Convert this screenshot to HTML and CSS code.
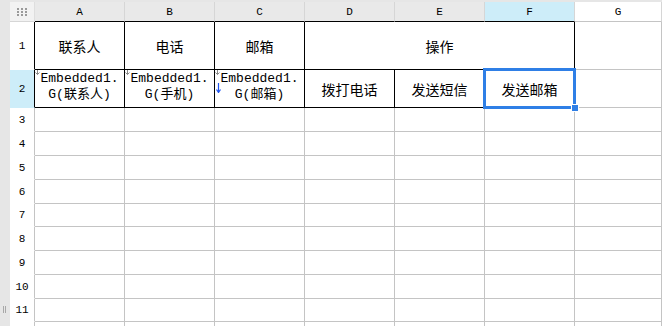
FILE: index.html
```html
<!DOCTYPE html>
<html lang="zh-CN">
<head>
  <meta charset="UTF-8">
  <meta name="viewport" content="width=device-width, initial-scale=1.0">
  <link rel="stylesheet" href="styles.css">
</head>
<body>
  <div class="app">
    <div class="strip"><span class="grip"></span></div>
    <table class="grid">
      <colgroup>
        <col class="col-rh">
        <col class="col"><col class="col"><col class="col">
        <col class="col"><col class="col"><col class="col">
        <col class="col-g">
      </colgroup>
      <thead>
        <tr>
          <th class="corner">
            <svg width="10" height="8" viewBox="0 0 10 8">
              <g fill="#9a9a9a">
                <rect x="0" y="0" width="2" height="2"/><rect x="4" y="0" width="2" height="2"/><rect x="8" y="0" width="2" height="2"/>
                <rect x="0" y="3" width="2" height="2"/><rect x="4" y="3" width="2" height="2"/><rect x="8" y="3" width="2" height="2"/>
                <rect x="0" y="6" width="2" height="2"/><rect x="4" y="6" width="2" height="2"/><rect x="8" y="6" width="2" height="2"/>
              </g>
            </svg>
          </th>
          <th class="ch ch-box">A</th>
          <th class="ch ch-box">B</th>
          <th class="ch ch-box">C</th>
          <th class="ch ch-box">D</th>
          <th class="ch ch-box">E</th>
          <th class="ch ch-box is-active">F</th>
          <th class="ch ch-free">G</th>
        </tr>
      </thead>
      <tbody>
        <tr class="r-title">
          <th class="rh rh-box">1</th>
          <td class="box">联系人</td>
          <td class="box">电话</td>
          <td class="box">邮箱</td>
          <td class="box" colspan="3">操作</td>
          <td></td>
        </tr>
        <tr class="r-data">
          <th class="rh rh-box is-active">2</th>
          <td class="box bind">
            <svg class="mark" width="5" height="5" viewBox="0 0 5 5"><path d="M2.5 0V4.5M0.5 2.5L2.5 4.5L4.5 2.5" stroke="#8a8a8a" fill="none"/></svg>
            Embedded1.<br>G(联系人)
          </td>
          <td class="box bind">
            <svg class="mark" width="5" height="5" viewBox="0 0 5 5"><path d="M2.5 0V4.5M0.5 2.5L2.5 4.5L4.5 2.5" stroke="#8a8a8a" fill="none"/></svg>
            Embedded1.<br>G(手机)
          </td>
          <td class="box bind">
            <svg class="mark" width="5" height="5" viewBox="0 0 5 5"><path d="M2.5 0V4.5M0.5 2.5L2.5 4.5L4.5 2.5" stroke="#8a8a8a" fill="none"/></svg>
            <svg class="expand" width="5" height="10" viewBox="0 0 5 10"><path d="M2.5 0V9M0.5 6.5L2.5 9.5L4.5 6.5" stroke="#1f55f0" stroke-width="1.2" fill="none"/></svg>
            Embedded1.<br>G(邮箱)
          </td>
          <td class="box">拨打电话</td>
          <td class="box">发送短信</td>
          <td class="box">
            <div class="sel"><span class="handle"></span></div>
            发送邮箱
          </td>
          <td></td>
        </tr>
        <tr><th class="rh">3</th><td></td><td></td><td></td><td></td><td></td><td></td><td></td></tr>
        <tr><th class="rh">4</th><td></td><td></td><td></td><td></td><td></td><td></td><td></td></tr>
        <tr><th class="rh">5</th><td></td><td></td><td></td><td></td><td></td><td></td><td></td></tr>
        <tr><th class="rh">6</th><td></td><td></td><td></td><td></td><td></td><td></td><td></td></tr>
        <tr class="r-short"><th class="rh">7</th><td></td><td></td><td></td><td></td><td></td><td></td><td></td></tr>
        <tr><th class="rh">8</th><td></td><td></td><td></td><td></td><td></td><td></td><td></td></tr>
        <tr><th class="rh">9</th><td></td><td></td><td></td><td></td><td></td><td></td><td></td></tr>
        <tr><th class="rh">10</th><td></td><td></td><td></td><td></td><td></td><td></td><td></td></tr>
        <tr class="r-short"><th class="rh">11</th><td></td><td></td><td></td><td></td><td></td><td></td><td></td></tr>
        <tr class="r-tail"><th class="rh"></th><td></td><td></td><td></td><td></td><td></td><td></td><td></td></tr>
      </tbody>
    </table>
  </div>
</body>
</html>
```

FILE: styles.css
```css
* {
  box-sizing: border-box;
}

body {
  margin: 0;
  background-color: #e6e6e6;
  font-family: "Noto Sans CJK SC", sans-serif;
  color: #000;
  overflow: hidden;
}

.app {
  display: flex;
  height: 100vh;
  overflow: hidden;
}

.strip {
  width: 10px;
  flex: none;
  display: flex;
  flex-direction: column;
  justify-content: flex-end;
  padding: 0 0 13px 3px;
}

.grip {
  width: 3px;
  height: 7px;
  border-left: 1px solid #a8a8a8;
  border-right: 1px solid #a8a8a8;
}

.grid {
  flex: none;
  align-self: flex-start;
  margin-top: 2px;
  width: 652px;
  table-layout: fixed;
  border-collapse: separate;
  border-spacing: 0;
}

.col-rh {
  width: 25px;
}

.col {
  width: 90px;
}

.col-g {
  width: 87px;
}

th, td {
  padding: 0;
  height: 24px;
  border-right: 1px solid #c4c4c4;
  border-bottom: 1px solid #c4c4c4;
  background-color: #fff;
  text-align: center;
  font-weight: normal;
}

thead th {
  height: 20px;
  background-color: #e9e9e9;
  border-right-color: #d6d6d6;
  border-bottom-color: #d6d6d6;
  font-size: 11px;
  font-family: "Liberation Mono", monospace;
}

thead th.corner {
  background-color: #f2f2f2;
  border-right-color: #dedede;
  line-height: 0;
}

thead th.ch-box {
  border-bottom-color: #000;
}

thead th.ch-free {
  background-color: #fff;
  border-bottom-color: #c4c4c4;
}

thead th.is-active,
tbody th.is-active {
  background-color: #cdedf9;
}

tbody th.rh {
  font-size: 11px;
  font-family: "Liberation Mono", monospace;
  border-bottom-color: transparent;
}

tbody th.rh-box {
  border-right-color: #000;
}

.r-title th,
.r-title td {
  height: 48px;
}

.r-data th,
.r-data td {
  height: 38px;
}

.r-short th,
.r-short td {
  height: 23px;
}

.r-tail th,
.r-tail td {
  height: 10px;
}

td.box {
  position: relative;
  border-right-color: #000;
  border-bottom-color: #000;
  font-size: 14px;
}

td.bind {
  padding-bottom: 4px;
  font-family: "Liberation Mono", "Noto Sans CJK SC", monospace;
  font-size: 13px;
  line-height: 16px;
  white-space: nowrap;
}

.mark {
  position: absolute;
  left: 0;
  top: 0;
}

.expand {
  position: absolute;
  left: 1px;
  top: 13px;
}

.sel {
  position: absolute;
  z-index: 2;
  left: -2px;
  top: -2px;
  right: -2px;
  bottom: -2px;
  border: 3px solid #2f7fe6;
}

.handle {
  position: absolute;
  right: -5px;
  bottom: -5px;
  width: 6px;
  height: 6px;
  background-color: #2f7fe6;
  outline: 1px solid #fff;
}
```
